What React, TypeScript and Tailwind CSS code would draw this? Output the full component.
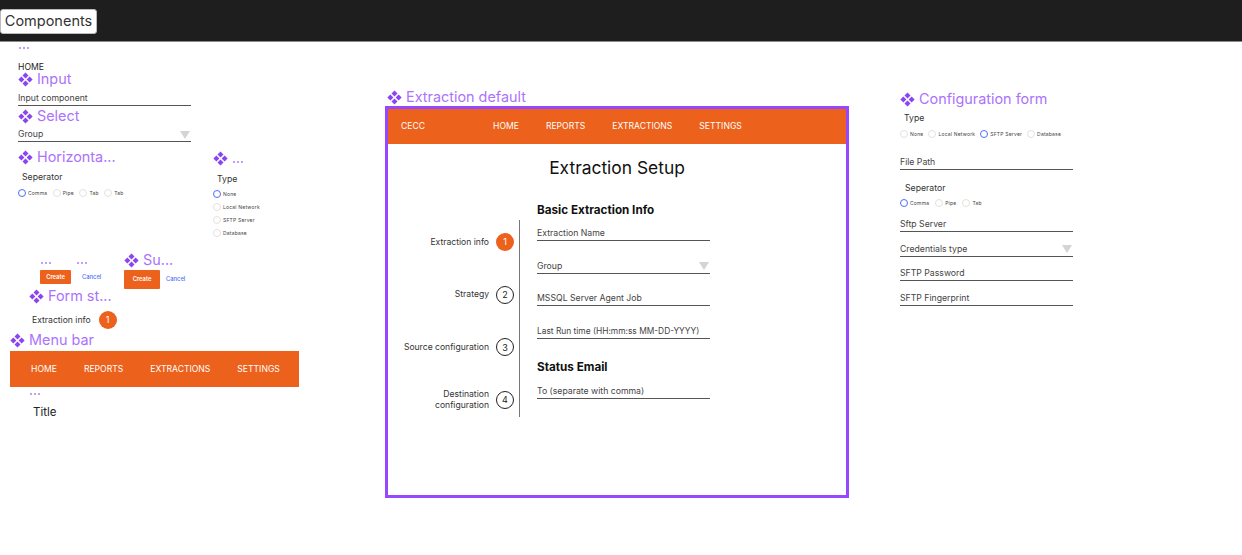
import React from "react";

const Diamond = () => (
  <svg width="15" height="15" viewBox="0 0 15 15" className="shrink-0 text-[#8b45f0]" fill="currentColor">
    <path d="M7.5 .4 10.5 3.4 7.5 6.4 4.5 3.4Z" />
    <path d="M7.5 8.6 10.5 11.6 7.5 14.6 4.5 11.6Z" />
    <path d="M3.4 4.5 6.4 7.5 3.4 10.5 .4 7.5Z" />
    <path d="M11.6 4.5 14.6 7.5 11.6 10.5 8.6 7.5Z" />
  </svg>
);

const Dots = () => <div className="flex gap-[2px]">{[0, 1, 2].map((i) => <span key={i} className="h-[2px] w-[2px] rounded-full bg-[#b27dff]" />)}</div>;

const Name = ({ children }: { children: React.ReactNode }) => (
  <div className="flex items-center gap-[4px] text-[14.4px] leading-[18px] text-[#ab73fb] whitespace-nowrap">
    <Diamond />
    <span>{children}</span>
  </div>
);

const Field = ({ label, select = false, cls = "" }: { label: string; select?: boolean; cls?: string }) => (
  <div className={`flex w-[173px] items-center justify-between border-b border-[#555] pb-[1px] pt-[1px] text-[8.7px] leading-[11px] text-[#444] ${cls}`}>
    <span className="whitespace-nowrap">{label}</span>
    {select && <span className="mr-[1px] h-0 w-0 border-x-[5px] border-t-[8px] border-x-transparent border-t-[#d4d4d4]" />}
  </div>
);

const Radio = ({ label, on = false, cls = "" }: { label: string; on?: boolean; cls?: string }) => (
  <div className={`flex items-center gap-[2px] text-[5px] leading-[8px] tracking-[0.2px] text-[#444] whitespace-nowrap ${cls}`}>
    <span className={`h-[8px] w-[8px] rounded-full border bg-white ${on ? "border-[#4f6ef7]" : "border-[#e2e2e2]"}`} />
    <span>{label}</span>
  </div>
);

const Step = ({ n, label, active = false }: { n: number; label: React.ReactNode; active?: boolean }) => (
  <div className="flex h-[18px] items-center justify-end gap-[7px]">
    <div className="text-right text-[8.6px] leading-[11px] text-[#333] whitespace-nowrap">{label}</div>
    <div className={`flex h-[18px] w-[18px] shrink-0 items-center justify-center rounded-full text-[9px] ${active ? "bg-[#ec611b] text-white" : "border border-[#222] text-[#222]"}`}>{n}</div>
  </div>
);

const Menu = ({ cls, gap, brand }: { cls: string; gap: string; brand?: boolean }) => (
  <div className={`flex items-center bg-[#ec611b] text-[8.6px] text-[#fff] ${cls}`}>
    {brand && <span className="w-[92px]">CECC</span>}
    <div className={`flex ${gap}`}>
      {["HOME", "REPORTS", "EXTRACTIONS", "SETTINGS"].map((t) => <span key={t}>{t}</span>)}
    </div>
  </div>
);

const CreateBtn = ({ cls }: { cls: string }) => (
  <div className={`flex items-center justify-center rounded-[1px] bg-[#ec611b] font-semibold text-white ${cls}`}>Create</div>
);

export default function App() {
  return (
    <div className="relative h-[555px] w-[1242px] overflow-hidden bg-white font-['Inter',sans-serif]">
      <div className="flex h-[42px] items-center border-b border-[#8a8a8a] bg-[#1e1e1e]">
        <div className="mt-[1px] flex h-[25px] w-[97px] items-center justify-center rounded-[3px] border border-[#bbb] bg-white text-[14.5px] text-[#333]">Components</div>
      </div>

      <div className="absolute left-[19px] top-[47px]"><Dots /></div>
      <div className="absolute left-[18px] top-[61px] text-[8.6px] leading-[12px] text-[#222]">HOME</div>

      <div className="absolute left-[18px] top-[70px]"><Name>Input</Name></div>
      <Field label="Input component" cls="absolute left-[18px] top-[92px] text-[#333]" />

      <div className="absolute left-[18px] top-[107px]"><Name>Select</Name></div>
      <Field label="Group" select cls="absolute left-[18px] top-[128px]" />

      <div className="absolute left-[18px] top-[148px]"><Name>Horizonta...</Name></div>
      <div className="absolute left-[22px] top-[171px] text-[8.7px] leading-[12px] text-[#333]">Seperator</div>
      <div className="absolute left-[18px] top-[189px] flex gap-[5.5px]">
        <Radio label="Comma" on />
        <Radio label="Pipe" />
        <Radio label="Tab" />
        <Radio label="Tab" />
      </div>

      <div className="absolute left-[213px] top-[151px] flex items-center gap-[5px]"><Diamond /><div className="mt-[6px]"><Dots /></div></div>
      <div className="absolute left-[217px] top-[173px] text-[8.7px] leading-[12px] text-[#333]">Type</div>
      <div className="absolute left-[213px] top-[190px] flex flex-col gap-[5px]">
        <Radio label="None" on />
        <Radio label="Local Network" />
        <Radio label="SFTP Server" />
        <Radio label="Database" />
      </div>

      <div className="absolute left-[41px] top-[262px]"><Dots /></div>
      <div className="absolute left-[77px] top-[262px]"><Dots /></div>
      <CreateBtn cls="absolute left-[40px] top-[270px] h-[14px] w-[31px] text-[5.8px]" />
      <div className="absolute left-[82px] top-[270px] flex h-[14px] items-center text-[5.8px] font-medium text-[#4f6ef7]">Cancel</div>

      <div className="absolute left-[124px] top-[251px]"><Name>Su...</Name></div>
      <CreateBtn cls="absolute left-[124px] top-[270px] h-[19px] w-[36px] text-[5.8px]" />
      <div className="absolute left-[166px] top-[270px] flex h-[19px] items-center text-[5.8px] font-medium text-[#4f6ef7]">Cancel</div>

      <div className="absolute left-[29px] top-[287px]"><Name>Form st...</Name></div>
      <div className="absolute left-[32px] top-[311px] flex items-center gap-[8px]">
        <span className="text-[8.6px] leading-[11px] text-[#333]">Extraction info</span>
        <span className="flex h-[18px] w-[18px] items-center justify-center rounded-full bg-[#ec611b] text-[9px] text-white">1</span>
      </div>

      <div className="absolute left-[10px] top-[331px]"><Name>Menu bar</Name></div>
      <Menu cls="absolute left-[10px] top-[351px] h-[36px] w-[289px] pl-[21px]" gap="gap-[27px]" />
      <div className="absolute left-[30px] top-[393px]"><Dots /></div>
      <div className="absolute left-[33px] top-[405px] text-[11.5px] leading-[15px] text-[#222]">Title</div>

      {/* Extraction default */}
      <div className="absolute left-[387px] top-[88px]"><Name>Extraction default</Name></div>
      <div className="absolute left-[385px] top-[106px] h-[392px] w-[464px] border-[3px] border-[#9747ff]">
        <Menu brand cls="h-[35px] pl-[13px]" gap="gap-[27px]" />
        <h1 className="mt-[13px] text-center text-[17.4px] leading-[22px] text-[#111]">Extraction Setup</h1>
        <div className="mt-[24px] flex">
          <div className="mt-[17px] box-content flex h-[184px] w-[126px] flex-col gap-[34.7px] border-r border-[#777] pr-[5px] pt-[13px]">
            <Step n={1} label="Extraction info" active />
            <Step n={2} label="Strategy" />
            <Step n={3} label="Source configuration" />
            <Step n={4} label={<>Destination<br />configuration</>} />
          </div>
          <div className="ml-[17px] flex flex-col">
            <div className="text-[11.7px] font-bold leading-[15px] text-[#111]">Basic Extraction Info</div>
            <Field label="Extraction Name" cls="mt-[9px]" />
            <Field label="Group" select cls="mt-[18.5px]" />
            <Field label="MSSQL Server Agent Job" cls="mt-[18.5px]" />
            <Field label="Last Run time (HH:mm:ss MM-DD-YYYY)" cls="mt-[18.5px] text-[8.4px]!" />
            <div className="mt-[21px] text-[11.7px] font-bold leading-[15px] text-[#111]">Status Email</div>
            <Field label="To (separate with comma)" cls="mt-[10px]" />
          </div>
        </div>
      </div>

      {/* Configuration form */}
      <div className="absolute left-[900px] top-[90px] flex w-[173px] flex-col">
        <Name>Configuration form</Name>
        <div className="ml-[4px] mt-[4px] text-[8.7px] leading-[12px] text-[#333]">Type</div>
        <div className="mt-[6px] flex gap-[5px]">
          <Radio label="None" />
          <Radio label="Local Network" />
          <Radio label="SFTP Server" on />
          <Radio label="Database" />
        </div>
        <Field label="File Path" cls="mt-[18px]" />
        <div className="ml-[5px] mt-[12px] text-[8.7px] leading-[12px] text-[#333]">Seperator</div>
        <div className="mt-[5px] flex gap-[6px]">
          <Radio label="Comma" on />
          <Radio label="Pipe" />
          <Radio label="Tab" />
        </div>
        <Field label="Sftp Server" cls="mt-[11px]" />
        <Field label="Credentials type" select cls="mt-[10.67px]" />
        <Field label="SFTP Password" cls="mt-[10.67px]" />
        <Field label="SFTP Fingerprint" cls="mt-[10.67px]" />
      </div>
    </div>
  );
}
